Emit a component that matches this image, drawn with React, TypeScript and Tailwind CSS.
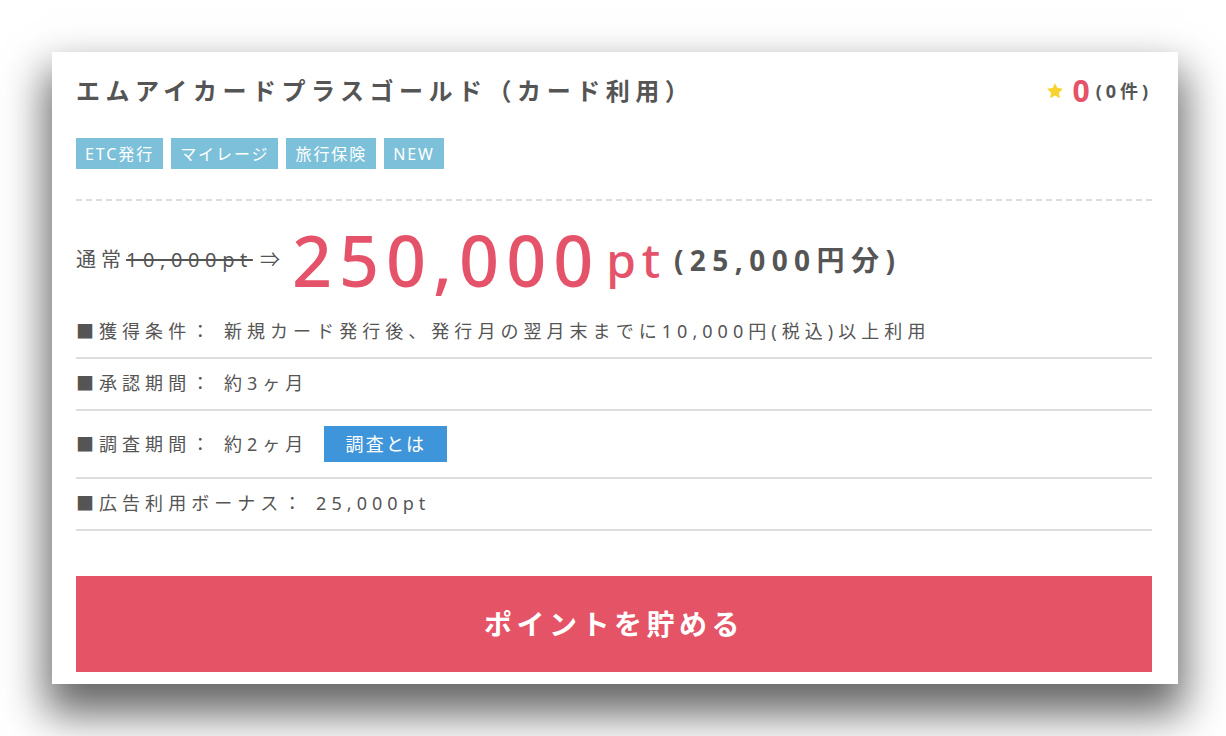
const jp = "font-['Noto_Sans','Noto_Sans_CJK_JP',sans-serif]";

const tags = ["ETC発行", "マイレージ", "旅行保険", "NEW"];

const StarIcon = () => (
  <svg width="18" height="18" viewBox="0 0 24 24">
    <path
      d="M12 1.5l3.2 6.6 7.3 1-5.3 5.1 1.3 7.3L12 18l-6.5 3.5 1.3-7.3L1.5 9.1l7.3-1z"
      fill="#f6d32d"
    />
  </svg>
);

export default function App() {
  return (
    <div className={`w-[1226px] h-[736px] bg-white pt-[52px] pl-[52px] overflow-hidden ${jp}`}>
      <div className="w-[1126px] h-[632px] bg-white shadow-[0_24px_40px_6px_rgba(0,0,0,0.6)] pl-6 pr-[26px] pt-[21px] flex flex-col">
        {/* title + rating */}
        <div className="flex items-center justify-between h-[36px]">
          <h1 className="text-[24px] font-bold text-[#555] tracking-[0.23em]">
            エムアイカードプラスゴールド（カード利用）
          </h1>
          <div className="flex items-center">
            <StarIcon />
            <span className="ml-[8px] text-[30px] font-bold text-[#e5536a] leading-none">0</span>
            <span className="ml-[6px] text-[18px] font-bold text-[#555] tracking-[0.22em]">(0件)</span>
          </div>
        </div>

        {/* tags */}
        <div className="flex gap-2 mt-[29px]">
          {tags.map((t) => (
            <span
              key={t}
              className="h-[31px] px-[9px] flex items-center bg-[#7cc1d9] text-white text-[16px] tracking-[0.12em]"
            >
              {t}
            </span>
          ))}
        </div>

        <div className="mt-[30px] border-t-2 border-dashed border-[#ddd]" />

        {/* price */}
        <div className="flex items-center h-[105px] pt-[12px] text-[#555]">
          <span className="text-[20px] leading-none tracking-[0.25em]">通常</span>
          <span className="text-[20px] leading-none line-through tracking-[0.28em]">10,000pt</span>
          <span className="text-[20px] leading-none ml-[7px]">⇒</span>
          <span className="ml-[12px] text-[70px] font-medium text-[#e5536a] tracking-[7px] leading-none">
            250,000
          </span>
          <span className="ml-[6px] text-[48px] font-medium text-[#e5536a] tracking-[0.12em] leading-none">
            pt
          </span>
          <span className="ml-[8px] text-[28px] font-bold leading-none tracking-[0.23em]">(25,000円分)</span>
        </div>

        {/* details */}
        <div className="text-[18px] text-[#555] tracking-[0.28em] leading-[22px]">
          <div className="pt-[14px] pb-[15px] border-b-2 border-[#ddd]">
            ■獲得条件： 新規カード発行後、発行月の翌月末までに10,000円(税込)以上利用
          </div>
          <div className="pt-[13px] pb-[15px] border-b-2 border-[#ddd]">■承認期間： 約3ヶ月</div>
          <div className="py-[15px] border-b-2 border-[#ddd] flex items-center">
            <span>■調査期間： 約2ヶ月</span>
            <span className="ml-[16px] h-[36px] w-[123px] flex items-center justify-center bg-[#3f95d9] text-white tracking-[0.12em]">
              調査とは
            </span>
          </div>
          <div className="pt-[13px] pb-[15px] border-b-2 border-[#ddd]">■広告利用ボーナス： 25,000pt</div>
        </div>

        <button className="mt-[45px] h-[96px] w-full bg-[#e55466] text-white text-[28px] font-bold tracking-[0.16em]">
          ポイントを貯める
        </button>
      </div>
    </div>
  );
}
